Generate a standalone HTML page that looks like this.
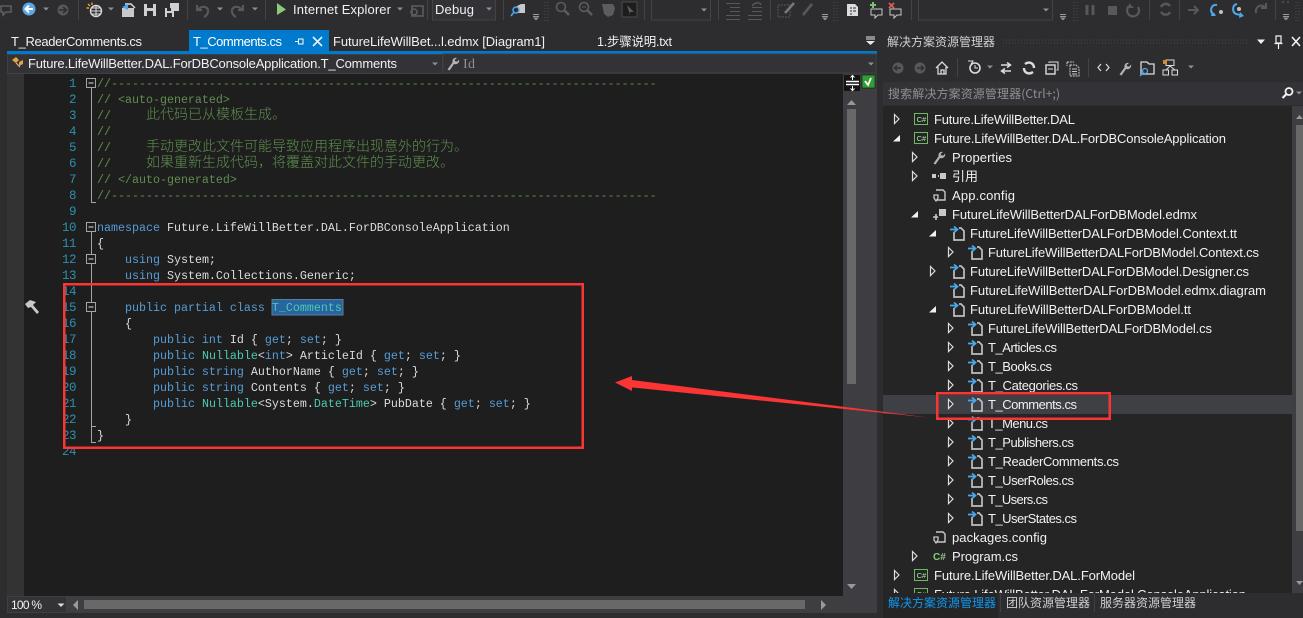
<!DOCTYPE html>
<html><head><meta charset="utf-8"><style>
html,body{margin:0;padding:0;background:#2d2d30;overflow:hidden;width:1303px;height:618px}
svg{display:block;position:absolute;left:0;top:0}
text{white-space:pre}
.ui{font-family:"Liberation Sans","Noto Sans CJK SC",sans-serif;font-size:13px;fill:#f1f1f1}
.cn{font-family:"Noto Sans CJK SC","Liberation Sans",sans-serif;font-size:12px;fill:#d0d0d0}
.c{font-family:"Liberation Mono","Noto Serif CJK SC",monospace;font-size:11.67px;fill:#dcdcdc}
.c .g,.g{fill:#5f8f4f}.c .k{fill:#569cd6}.c .t{fill:#4ec9b0}
.c tspan.z{font-family:"Noto Sans CJK SC",sans-serif;font-size:14px;font-weight:300}
.n{font-family:"Liberation Mono",monospace;font-size:12.5px;letter-spacing:-.5px;fill:#2b91af;text-anchor:end}
.i{fill:none;stroke:#8a8a8a;stroke-width:1.5}
.d{fill:none;stroke:#5c5c5f;stroke-width:1.6}
</style></head><body>
<svg width="1303" height="618" viewBox="0 0 1303 618" xmlns="http://www.w3.org/2000/svg">
<defs>
<path id="to" d="M-1.5-4.5 L3 0 L-1.5 4.5Z" fill="#252526" stroke="#dcdcdc" stroke-width="1.2"/>
<path id="tf" d="M4-3V3.500H-3Z" fill="#f1f1f1"/>
<path id="dd" d="M-3-1.5H3L0 1.5Z" fill="#8f8f8f"/>
<path id="ddl" d="M-3.5-1.5H3.5L0 2Z" fill="#dcdcdc"/>
<g id="file"><path d="M2-1V7H12V-2L9-5H7" fill="none" stroke="#c0c0c0" stroke-width="1.700"/><path d="M-2-3.500H5M2-6.500L5.500-3.500L2-.5" fill="none" stroke="#4da6e8" stroke-width="1.800"/></g>
<g id="csb"><rect x=".5" y="-5.5" width="13" height="11" fill="#1f2a1f" stroke="#71b56b"/><text x="2.6" y="3" style="font:7.5px 'Liberation Sans',sans-serif;fill:#d0d0d0">C#</text></g>
<g id="cfg"><path d="M2-5H9L11-3V5H3" fill="none" stroke="#c8c8c8" stroke-width="1.4"/><path d="M0 0H4V3L2 6L0 3Z" fill="none" stroke="#c8c8c8" stroke-width="1.3"/></g>
<g id="wr"><path d="M.5 6.500L5.500-.5C5-4 7.500-6 10-5L7.500-3L8.500-1.500L10.500-1.500L12-3.500C13-1 10.500 2 7 1L2.500 7.500Z" fill="#b4b4b4"/></g>
<g id="grip"><path d="M0 0V23M3 0V23" stroke="#4a4a4d" stroke-width="1" stroke-dasharray="1 2"/></g>
</defs>

<!-- base -->
<rect width="1303" height="618" fill="#2d2d30"/>
<!-- toolbar separators -->
<path d="M78.5 0V20M187.5 0V20M265.5 0V20M427.5 0V20M503.5 0V20M644.5 0V20M718.5 0V20M770.5 0V20M911.5 0V20M1149.5 0V20M1179.5 0V20M1275.5 0V20" stroke="#434346" fill="none"/>

<!-- toolbar icons -->
<path d="M1 6H11V12H6L3 15V12H1Z" class="d"/>
<circle cx="29" cy="9" r="6.5" fill="#5aa6e6"/><path d="M33 9H26M29 5.5L25.5 9L29 12.5" fill="none" stroke="#fff" stroke-width="2"/>
<use href="#dd" x="46" y="9"/>
<circle cx="63" cy="10" r="5.5" fill="#58585b"/><path d="M59 10H66M63 7L66.500 10L63 13" fill="none" stroke="#2d2d30" stroke-width="1.600"/>
<circle cx="96" cy="11" r="5.500" fill="none" stroke="#dcdcdc" stroke-width="1.400"/><path d="M90.500 11H101.500M96 5.500V16.500M92 8H100M92 14H100" stroke="#dcdcdc" fill="none"/><path d="M88 4L90 6M92 2.500V5M86.500 8H89" stroke="#e8a33c" stroke-width="1.400" fill="none"/>
<use href="#dd" x="111" y="9"/>
<path d="M122 8H134V17H122Z" fill="#c8c8c8"/><path d="M125 4H131L135 8" stroke="#dcdcdc" stroke-width="1.400" fill="none"/><path d="M122 7L128 4V10" fill="#4da6e8"/>
<path d="M144 4H156V16H144Z" fill="#d0d0d0"/><rect x="147" y="4" width="6" height="4" fill="#2d2d30"/><rect x="147" y="11" width="6" height="5" fill="#2d2d30"/>
<path d="M170 3H179V11H170ZM165 8H174V17H165Z" fill="#d0d0d0"/><rect x="167" y="8" width="4" height="3" fill="#2d2d30"/><rect x="167" y="13" width="5" height="4" fill="#2d2d30"/>
<path d="M197 5V10H202M198 10C201 5 209 6 208 12C207.500 14 206 16 204 17" fill="none" stroke="#58585b" stroke-width="2.200"/>
<use href="#dd" x="220" y="9"/>
<path d="M243 5V10H238M242 10C239 5 231 6 232 12C232.500 14 234 16 236 17" fill="none" stroke="#58585b" stroke-width="2.200"/>
<use href="#dd" x="255" y="9"/>
<path d="M277 3L286 9.500L277 15Z" fill="#8cc97a"/>
<text class="ui" x="293" y="14" textLength="98" lengthAdjust="spacing">Internet Explorer</text>
<use href="#dd" x="400" y="9"/>
<rect x="412" y="6" width="11" height="10" class="d"/><circle cx="414" cy="12" r="3" class="d"/>
<!-- Debug combo -->
<rect x="432.500" y="-2" width="63" height="22" fill="#333337" stroke="#434346"/>
<text class="ui" x="435" y="14" textLength="39" lengthAdjust="spacing">Debug</text>
<use href="#dd" x="489" y="9"/>
<path d="M517 6L521 4H525V13H517Z" fill="#c8c8c8"/><circle cx="516" cy="10" r="3" fill="#2d2d30" stroke="#4da6e8" stroke-width="1.500"/><path d="M514 12L511 16" stroke="#4da6e8" stroke-width="1.500"/>
<path d="M533 14.500H539M533 16.500H539" stroke="#999"/><use href="#dd" x="536" y="19"/>
<use href="#grip" x="545" y="-1"/>
<circle cx="561" cy="7" r="4.500" class="d"/><path d="M564 10L569 15" stroke="#5c5c5f" stroke-width="2.500"/>
<circle cx="584" cy="7" r="4.500" class="d"/><path d="M587 10L592 15" stroke="#5c5c5f" stroke-width="2.500"/><path d="M582 7H586" stroke="#5c5c5f"/>
<path d="M602 4H613L615 8L613 15L608 17L604 14Z" fill="#5c5c5f"/>
<rect x="622" y="2" width="15" height="15" fill="#1d1d1e" stroke="#4a4a4d"/><path d="M627 5L634 12H630L630 15Z" fill="#5c5c5f"/>
<rect x="651.500" y="-2" width="59" height="22" fill="none" stroke="#434346"/><use href="#dd" x="704" y="10"/>
<path d="M726 3.500H740M730 7.500H740M730 11.500H740M726 15.500H740M726 19.500H740" stroke="#58585b" fill="none"/>
<path d="M752 7.500H762M752 11.500H762M748 15.500H762M748 19.500H762" stroke="#58585b" fill="none"/><path d="M752 6C755 2 760 2 761 5" stroke="#58585b" fill="none" stroke-width="1.400"/>
<rect x="778" y="5" width="12" height="12" fill="none" stroke="#58585b" stroke-dasharray="2 1"/><path d="M785 13L794 3" stroke="#777" stroke-width="2.600"/>
<path d="M803 15L812 4" stroke="#58585b" stroke-width="2.600"/>
<path d="M822 14.500H828M822 16.500H828" stroke="#999"/><use href="#dd" x="825" y="19"/>
<use href="#grip" x="834" y="-1"/>
<path d="M847 4H855L858 7V16H847Z" fill="#dcdcdc"/><path d="M850 8H852M850 11H852M850 14H852M853 8H856M853 11H856" stroke="#2d2d30"/>
<path d="M871 9H882V15H878L875 18V15H871Z" fill="none" stroke="#c8c8c8"/><path d="M870 5H876M873 2V8" stroke="#7ac46f" stroke-width="2"/>
<path d="M890 9H901V15H897L894 18V15H890Z" fill="none" stroke="#c8c8c8"/><path d="M889 3L894 8M894 3L889 8" stroke="#e05a4f" stroke-width="1.800"/>
<rect x="918.500" y="-2" width="134" height="22" fill="none" stroke="#434346"/><use href="#dd" x="1046" y="10"/>
<path d="M1060 14.500H1066M1060 16.500H1066" stroke="#999"/><use href="#dd" x="1063" y="19"/>
<use href="#grip" x="1074" y="-1"/>
<path d="M1087 5V15M1093 5V15" stroke="#58585b" stroke-width="3"/>
<rect x="1108" y="6" width="9" height="9" fill="#58585b"/>
<path d="M1129 6A6 6 0 1 0 1138 7" fill="none" stroke="#58585b" stroke-width="2.200"/><path d="M1129 3V8H1134Z" fill="#58585b"/>
<path d="M1161 7C1163 3 1168 3 1170 6M1170 12C1168 16 1163 15 1161 12" fill="none" stroke="#58585b" stroke-width="2.500"/>
<path d="M1188 10H1197M1194 6L1198 10L1194 14" fill="none" stroke="#58585b" stroke-width="2"/>
<path d="M1217 5C1211 4 1210 11 1212 13L1215 15" fill="none" stroke="#4da6e8" stroke-width="2"/><path d="M1212 11L1216 16H1211Z" fill="#4da6e8"/><circle cx="1221" cy="12" r="2" fill="#c0c0c0"/>
<path d="M1237 4C1232 5 1232 12 1236 14L1241 15" fill="none" stroke="#4da6e8" stroke-width="2"/><path d="M1240 12L1244 16L1239 18Z" fill="#4da6e8"/><circle cx="1239" cy="9" r="2" fill="#c0c0c0"/>
<path d="M1256 13C1255 6 1261 4 1265 7M1266 3V8H1261" fill="none" stroke="#58585b" stroke-width="2"/>
<path d="M1283 14.500H1289M1283 16.500H1289" stroke="#999"/><use href="#dd" x="1286" y="19"/>
<path d="M1283 1V3M1288 1V3" stroke="#666"/>
<use href="#grip" x="1296" y="-1"/>

<!-- tab strip -->
<rect x="189" y="30" width="140" height="21" fill="#007acc"/>
<rect x="7" y="51" width="870" height="3" fill="#007acc"/>
<text class="ui" x="11" y="46" textLength="131" lengthAdjust="spacing">T_ReaderComments.cs</text>
<text class="ui" x="193" y="46" textLength="89" lengthAdjust="spacing" style="fill:#fff">T_Comments.cs</text>
<path d="M295 41.500H298M298.500 39V44H303V39ZM298.500 39H303" fill="none" stroke="#fff"/>
<path d="M313 37L322 46M322 37L313 46" stroke="#e8f2fa" stroke-width="1.600"/>
<text class="ui" x="333" y="46" textLength="212" lengthAdjust="spacing">FutureLifeWillBet...l.edmx [Diagram1]</text>
<text class="ui" x="597" y="46" textLength="75" lengthAdjust="spacing" style="font-size:12.500px">1.步骤说明.txt</text>
<path d="M866 37H875M866 39H875" stroke="#e8e8e8" fill="none"/><path d="M866 41H875L870.500 45Z" fill="#e8e8e8"/>

<!-- navigation bar -->
<rect x="7.500" y="54.500" width="435" height="19" fill="#333337" stroke="#3f3f46"/>
<rect x="443" y="54" width="434" height="20" fill="#333337"/>
<rect x="443" y="54" width="433" height="19" fill="none" stroke="#3f3f46"/>
<path d="M12 60L16 57L19 60L16 63ZM19 62L23 60V64L19 66V62Z" fill="#e8a33c"/><path d="M16 63L20 67" stroke="#c8c8c8"/>
<text class="ui" x="28" y="68" textLength="369" lengthAdjust="spacing">Future.LifeWillBetter.DAL.ForDBConsoleApplication.T_Comments</text>
<use href="#dd" x="435" y="64"/>
<use href="#wr" x="447" y="63"/>
<text x="463" y="68" style="font:14px 'Liberation Serif',serif;fill:#909090" textLength="12" lengthAdjust="spacing">Id</text>
<use href="#dd" x="871" y="64"/>

<!-- editor -->
<rect x="7" y="74" width="17" height="522" fill="#333333"/>
<rect x="24" y="74" width="819" height="522" fill="#1e1e1e"/>
<!-- vertical scrollbar -->
<rect x="843" y="74" width="34" height="522" fill="#3e3e42"/>
<rect x="844" y="75" width="16" height="16" fill="#141414"/>
<path d="M846 81.500H859M846 84.500H859" stroke="#fff" stroke-width="1.400"/><path d="M852.500 76V80M852.500 86V90M850.500 77.500L852.500 75.500L854.500 77.500M850.500 88.500L852.500 90.500L854.500 88.500" stroke="#fff" fill="none"/>
<rect x="862" y="75" width="13" height="13" fill="#2f9e33" stroke="#111" stroke-width=".6"/><path d="M865 81L868 85L871 78" stroke="#fff" stroke-width="1.800" fill="none"/>
<path d="M847 105L851.500 100L856 105Z" fill="#999"/>
<rect x="847" y="109" width="9" height="275" fill="#686868"/>
<path d="M847 584L851.500 589L856 584Z" fill="#999"/>

<!-- gutter folding -->
<g fill="none" stroke="#a5a5a5">
<path d="M91.500 88V202.500H96"/>
<path d="M91.500 232V426.500H96M91.500 426.500V442.500H96"/>
<rect x="86.500" y="78.500" width="9" height="9" fill="#1e1e1e"/><path d="M88.500 83H93.500" stroke="#dcdcdc"/>
<rect x="86.500" y="222.500" width="9" height="9" fill="#1e1e1e"/><path d="M88.500 227H93.500" stroke="#dcdcdc"/>
<rect x="86.500" y="254.500" width="9" height="9" fill="#1e1e1e"/><path d="M88.500 259H93.500" stroke="#dcdcdc"/>
<rect x="86.500" y="302.500" width="9" height="9" fill="#1e1e1e"/><path d="M88.500 307H93.500" stroke="#dcdcdc"/>
</g>
<!-- hammer -->
<path d="M25 304L30 300L36 302L33 305L39 312L37 314L31 307L28 308Z" fill="#c8c8c8"/>

<!-- line numbers -->
<text class="n" x="76" y="87">1</text><text class="n" x="76" y="103">2</text><text class="n" x="76" y="119">3</text><text class="n" x="76" y="135">4</text><text class="n" x="76" y="151">5</text><text class="n" x="76" y="167">6</text><text class="n" x="76" y="183">7</text><text class="n" x="76" y="199">8</text><text class="n" x="76" y="215">9</text><text class="n" x="76" y="231">10</text><text class="n" x="76" y="247">11</text><text class="n" x="76" y="263">12</text><text class="n" x="76" y="279">13</text><text class="n" x="76" y="295">14</text><text class="n" x="76" y="311">15</text><text class="n" x="76" y="327">16</text><text class="n" x="76" y="343">17</text><text class="n" x="76" y="359">18</text><text class="n" x="76" y="375">19</text><text class="n" x="76" y="391">20</text><text class="n" x="76" y="407">21</text><text class="n" x="76" y="423">22</text><text class="n" x="76" y="439">23</text><text class="n" x="76" y="455">24</text>

<!-- selection -->
<rect x="272" y="299.500" width="71" height="15.500" fill="#26659f" stroke="#5a7ea0"/>

<!-- code -->
<text class="c" x="97" y="87"><tspan class="g">//------------------------------------------------------------------------------</tspan></text>
<text class="c" x="97" y="103"><tspan class="g">// &lt;auto-generated&gt;</tspan></text>
<text class="c" x="97" y="119"><tspan class="g">//     <tspan class="z">此代码已从模板生成。</tspan></tspan></text>
<text class="c" x="97" y="135"><tspan class="g">//</tspan></text>
<text class="c" x="97" y="151"><tspan class="g">//     <tspan class="z">手动更改此文件可能导致应用程序出现意外的行为。</tspan></tspan></text>
<text class="c" x="97" y="167"><tspan class="g">//     <tspan class="z">如果重新生成代码，将覆盖对此文件的手动更改。</tspan></tspan></text>
<text class="c" x="97" y="183"><tspan class="g">// &lt;/auto-generated&gt;</tspan></text>
<text class="c" x="97" y="199"><tspan class="g">//------------------------------------------------------------------------------</tspan></text>
<text class="c" x="97" y="231"><tspan class="k">namespace</tspan> Future.LifeWillBetter.DAL.ForDBConsoleApplication</text>
<text class="c" x="97" y="247">{</text>
<text class="c" x="97" y="263">    <tspan class="k">using</tspan> System;</text>
<text class="c" x="97" y="279">    <tspan class="k">using</tspan> System.Collections.Generic;</text>
<text class="c" x="97" y="311">    <tspan class="k">public partial class</tspan> <tspan class="t">T_Comments</tspan></text>
<text class="c" x="97" y="327">    {</text>
<text class="c" x="97" y="343">        <tspan class="k">public int</tspan> Id { <tspan class="k">get</tspan>; <tspan class="k">set</tspan>; }</text>
<text class="c" x="97" y="359">        <tspan class="k">public</tspan> <tspan class="t">Nullable</tspan>&lt;<tspan class="k">int</tspan>&gt; ArticleId { <tspan class="k">get</tspan>; <tspan class="k">set</tspan>; }</text>
<text class="c" x="97" y="375">        <tspan class="k">public string</tspan> AuthorName { <tspan class="k">get</tspan>; <tspan class="k">set</tspan>; }</text>
<text class="c" x="97" y="391">        <tspan class="k">public string</tspan> Contents { <tspan class="k">get</tspan>; <tspan class="k">set</tspan>; }</text>
<text class="c" x="97" y="407">        <tspan class="k">public</tspan> <tspan class="t">Nullable</tspan>&lt;System.<tspan class="t">DateTime</tspan>&gt; PubDate { <tspan class="k">get</tspan>; <tspan class="k">set</tspan>; }</text>
<text class="c" x="97" y="423">    }</text>
<text class="c" x="97" y="439">}</text>

<!-- bottom of editor -->
<rect x="7" y="596" width="870" height="17" fill="#3e3e42"/>
<rect x="7.500" y="596.500" width="59" height="16" fill="#333337" stroke="#3f3f46"/>
<text class="ui" x="11" y="609" style="font-size:12px" textLength="31" lengthAdjust="spacing">100 %</text>
<use href="#ddl" x="61" y="605"/>
<path d="M78 600V610L73 605Z" fill="#999"/>
<rect x="84" y="600" width="721" height="9" fill="#686868"/>
<path d="M821 600V610L826 605Z" fill="#999"/>
<rect x="0" y="613" width="880" height="5" fill="#2d2d30"/>

<!-- solution explorer -->
<rect x="883" y="30" width="420" height="588" fill="#2d2d30"/>
<text class="cn" x="887" y="46" style="font-size:12px" textLength="108" lengthAdjust="spacing">解决方案资源管理器</text>
<path d="M1003 40H1248M1003 43H1248" stroke="#48484b" stroke-dasharray="1 2"/>
<path d="M1257 39.500H1265L1261 44Z" fill="#f1f1f1"/>
<path d="M1276 36H1281V43H1276ZM1274.500 43.500H1282.500M1278.500 44V49" fill="none" stroke="#f1f1f1" stroke-width="1.200"/>
<path d="M1292 37L1300 46M1300 37L1292 46" stroke="#f1f1f1" stroke-width="1.600"/>

<!-- explorer toolbar -->
<circle cx="898" cy="68" r="5.500" fill="#58585b"/><path d="M901 68H895M897 65.500L894.500 68L897 70.500" stroke="#2d2d30" stroke-width="1.400" fill="none"/>
<circle cx="920" cy="68" r="5.500" fill="#58585b"/><path d="M917 68H923M921 65.500L923.500 68L921 70.500" stroke="#2d2d30" stroke-width="1.400" fill="none"/>
<path d="M936 68L942 62L948 68M938 67V74H946V67M941 74V70H944V74" fill="none" stroke="#dcdcdc" stroke-width="1.300"/>
<path d="M957.500 58V77M1088.500 58V77" stroke="#434346"/>
<circle cx="975" cy="68" r="5" fill="none" stroke="#dcdcdc" stroke-width="1.600"/><path d="M975 65V68H978M968 61H973L971 64" fill="none" stroke="#dcdcdc"/>
<use href="#dd" x="990" y="67"/>
<path d="M1001 65H1010M1007 62.500L1010.500 65L1007 67.500M1011 71H1002M1005 68.500L1001.500 71L1005 73.500" fill="none" stroke="#dcdcdc" stroke-width="1.500"/>
<path d="M1025 64C1029 61 1034 63 1034 68M1033 72C1029 75 1024 73 1024 68" fill="none" stroke="#dcdcdc" stroke-width="2.400"/>
<rect x="1046" y="65" width="9" height="9" fill="none" stroke="#dcdcdc" stroke-width="1.400"/><path d="M1049 63V62H1058V70H1056.500M1048 69H1053" fill="none" stroke="#dcdcdc"/>
<path d="M1067 62H1074M1067 62V66M1070 65H1076L1079 68V76H1070Z" fill="none" stroke="#c8c8c8" stroke-dasharray="2 .8"/><path d="M1072 69H1077M1072 71.500H1077M1072 74H1077" stroke="#c8c8c8"/>
<path d="M1101 64L1098 67.500L1101 71M1106 64L1109 67.500L1106 71" fill="none" stroke="#dcdcdc" stroke-width="1.200"/>
<use href="#wr" x="1119" y="68"/>
<path d="M1141 62H1147L1149 64H1154V74H1141Z" fill="none" stroke="#dcdcdc" stroke-width="1.300"/><circle cx="1145" cy="71" r="2.500" fill="#2d2d30" stroke="#4da6e8" stroke-width="1.300"/><path d="M1143 73L1140 76" stroke="#4da6e8" stroke-width="1.400"/>
<rect x="1166" y="60" width="8" height="5.500" fill="none" stroke="#dcdcdc"/><rect x="1163" y="70" width="5.500" height="5" fill="none" stroke="#dcdcdc"/><rect x="1172" y="70" width="5.500" height="5" fill="none" stroke="#dcdcdc"/><path d="M1170 66L1166 70M1170 66L1175 70" stroke="#dcdcdc"/><rect x="1163" y="60" width="4" height="4" fill="#d58c2a"/>
<use href="#dd" x="1191" y="67"/>

<!-- search -->
<rect x="883" y="82" width="420" height="23" fill="#333337"/>
<text class="cn" x="888" y="98" style="font-size:12px;fill:#909090" textLength="172" lengthAdjust="spacing">搜索解决方案资源管理器(Ctrl+;)</text>
<circle cx="1289" cy="91.500" r="3.500" fill="none" stroke="#f1f1f1" stroke-width="1.800"/><path d="M1286.500 94L1282.500 98" stroke="#f1f1f1" stroke-width="2.200"/>
<use href="#dd" x="1299" y="93"/>

<!-- tree -->
<rect x="883" y="106" width="420" height="487" fill="#252526"/>
<rect x="1292" y="106" width="11" height="487" fill="#3e3e42"/>
<rect x="1296" y="125" width="7" height="406" fill="#686868"/>
<path d="M1296 119L1299.500 115L1303 119Z" fill="#999"/><path d="M1296 581L1299.500 585L1303 581Z" fill="#999"/>
<rect x="883" y="395" width="409" height="19" fill="#3f3f46"/>

<use href="#to" x="896" y="119"/><use href="#csb" x="914" y="119"/><text class="ui" x="934" y="124" textLength="141" lengthAdjust="spacing">Future.LifeWillBetter.DAL</text>
<use href="#tf" x="896" y="138"/><use href="#csb" x="914" y="138"/><text class="ui" x="934" y="143" textLength="292" lengthAdjust="spacing">Future.LifeWillBetter.DAL.ForDBConsoleApplication</text>
<use href="#to" x="914" y="157"/><use href="#wr" x="933" y="157"/><text class="ui" x="952" y="162" textLength="60" lengthAdjust="spacing">Properties</text>
<use href="#to" x="914" y="176"/><path d="M932 174H936V178H932ZM938 175H939V177H938ZM940 173H946V179H940Z" fill="#c8c8c8"/><text class="ui" x="952" y="181">引用</text>
<use href="#cfg" x="934" y="195"/><text class="ui" x="952" y="200" textLength="63" lengthAdjust="spacing">App.config</text>
<use href="#tf" x="914" y="214"/><path d="M939 209H946V216H939Z" fill="#c8c8c8"/><path d="M933 217H938M936 214V220" stroke="#c8c8c8" stroke-width="1.600"/><text class="ui" x="952" y="219" textLength="245" lengthAdjust="spacing">FutureLifeWillBetterDALForDBModel.edmx</text>
<use href="#tf" x="932" y="233"/><use href="#file" x="952" y="233"/><text class="ui" x="970" y="238" textLength="267" lengthAdjust="spacing">FutureLifeWillBetterDALForDBModel.Context.tt</text>
<use href="#to" x="950" y="252"/><use href="#file" x="970" y="252"/><text class="ui" x="988" y="257" textLength="271" lengthAdjust="spacing">FutureLifeWillBetterDALForDBModel.Context.cs</text>
<use href="#to" x="932" y="271"/><use href="#file" x="952" y="271"/><text class="ui" x="970" y="276" textLength="279" lengthAdjust="spacing">FutureLifeWillBetterDALForDBModel.Designer.cs</text>
<use href="#file" x="952" y="290"/><text class="ui" x="970" y="295" textLength="296" lengthAdjust="spacing">FutureLifeWillBetterDALForDBModel.edmx.diagram</text>
<use href="#tf" x="932" y="309"/><use href="#file" x="952" y="309"/><text class="ui" x="970" y="314" textLength="221" lengthAdjust="spacing">FutureLifeWillBetterDALForDBModel.tt</text>
<use href="#to" x="950" y="328"/><use href="#file" x="970" y="328"/><text class="ui" x="988" y="333" textLength="224" lengthAdjust="spacing">FutureLifeWillBetterDALForDBModel.cs</text>
<use href="#to" x="950" y="347"/><use href="#file" x="970" y="347"/><text class="ui" x="988" y="352" textLength="69" lengthAdjust="spacing">T_Articles.cs</text>
<use href="#to" x="950" y="366"/><use href="#file" x="970" y="366"/><text class="ui" x="988" y="371" textLength="64" lengthAdjust="spacing">T_Books.cs</text>
<use href="#to" x="950" y="385"/><use href="#file" x="970" y="385"/><text class="ui" x="988" y="390" textLength="90" lengthAdjust="spacing">T_Categories.cs</text>
<use href="#to" x="950" y="404"/><use href="#file" x="970" y="404"/><text class="ui" x="988" y="409" textLength="89" lengthAdjust="spacing">T_Comments.cs</text>
<use href="#to" x="950" y="423"/><use href="#file" x="970" y="423"/><text class="ui" x="988" y="428" textLength="60" lengthAdjust="spacing">T_Menu.cs</text>
<use href="#to" x="950" y="442"/><use href="#file" x="970" y="442"/><text class="ui" x="988" y="447" textLength="86" lengthAdjust="spacing">T_Publishers.cs</text>
<use href="#to" x="950" y="461"/><use href="#file" x="970" y="461"/><text class="ui" x="988" y="466" textLength="131" lengthAdjust="spacing">T_ReaderComments.cs</text>
<use href="#to" x="950" y="480"/><use href="#file" x="970" y="480"/><text class="ui" x="988" y="485" textLength="86" lengthAdjust="spacing">T_UserRoles.cs</text>
<use href="#to" x="950" y="499"/><use href="#file" x="970" y="499"/><text class="ui" x="988" y="504" textLength="60" lengthAdjust="spacing">T_Users.cs</text>
<use href="#to" x="950" y="518"/><use href="#file" x="970" y="518"/><text class="ui" x="988" y="523" textLength="89" lengthAdjust="spacing">T_UserStates.cs</text>
<use href="#cfg" x="934" y="537"/><text class="ui" x="952" y="542" textLength="95" lengthAdjust="spacing">packages.config</text>
<use href="#to" x="914" y="556"/><text x="933" y="560" style="font:bold 10px 'Liberation Sans',sans-serif;fill:#8bc97f">C#</text><text class="ui" x="952" y="561" textLength="66" lengthAdjust="spacing">Program.cs</text>
<use href="#to" x="896" y="575"/><use href="#csb" x="914" y="575"/><text class="ui" x="934" y="580" textLength="201" lengthAdjust="spacing">Future.LifeWillBetter.DAL.ForModel</text>
<use href="#to" x="896" y="594"/><use href="#csb" x="914" y="594"/><text class="ui" x="934" y="599" textLength="312" lengthAdjust="spacing">Future.LifeWillBetter.DAL.ForModel.ConsoleApplication</text>

<!-- bottom tabs -->
<rect x="883" y="593" width="420" height="25" fill="#2d2d30"/>
<rect x="883" y="593" width="115" height="25" fill="#252526"/>
<path d="M1000.500 594V612M1094.500 594V612" stroke="#3f3f46"/>
<text class="cn" x="888" y="607" style="fill:#0e97f0" textLength="108" lengthAdjust="spacing">解决方案资源管理器</text>
<text class="cn" x="1006" y="607" textLength="84" lengthAdjust="spacing">团队资源管理器</text>
<text class="cn" x="1100" y="607" textLength="96" lengthAdjust="spacing">服务器资源管理器</text>

<!-- annotations -->
<rect x="64.250" y="284.250" width="518.500" height="163.500" fill="none" stroke="#fb3434" stroke-width="2.500"/>
<rect x="937.250" y="393.250" width="172.500" height="25.500" fill="none" stroke="#fb3434" stroke-width="2.500"/>
<path d="M615 382.500L632 376L632 380L928 417.500L632 387.500L632 391Z" fill="#fb3434"/>
</svg>
</body></html>
